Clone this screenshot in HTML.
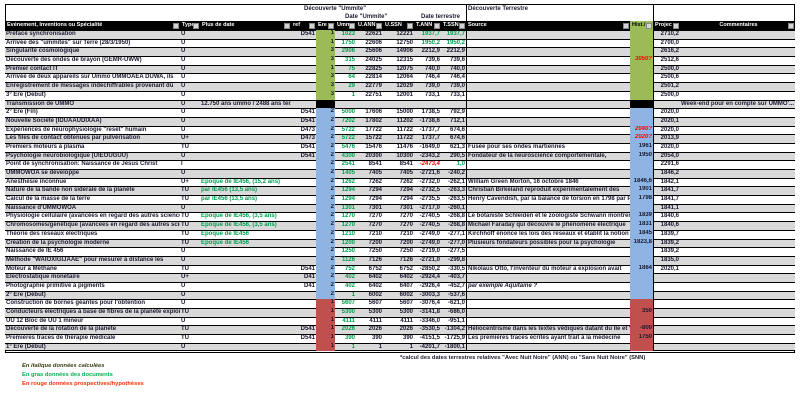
<!DOCTYPE html>
<html><head><meta charset="utf-8">
<style>
*{margin:0;padding:0;box-sizing:border-box}
body{width:800px;height:400px;background:#fff;font-family:"Liberation Sans",sans-serif;position:relative;overflow:hidden;color:#1a1a30}
.abs{position:absolute;white-space:nowrap}
#box{position:absolute;left:5px;top:4px;width:790px;height:349px;border:1px solid #000}
.vl{position:absolute;top:4px;width:1px;height:18px;background:#000}
#hdr{position:absolute;left:5px;top:21px;width:790px;height:9px;background:#000;display:flex}
#hdr div{position:relative;color:#fff;font-weight:bold;font-size:5.5px;line-height:9px;padding-left:2px;overflow:hidden;white-space:nowrap}
#hdr div i{position:absolute;right:1px;top:1.5px;width:6px;height:6px;background:#d4d4d4;border:1px solid #888}
#rows{position:absolute;left:5px;top:30px;width:790px}
.r{height:8.7px;display:flex;border-top:1px solid #000;background:#fff}
.r.g{background:#d9d9d9}
.r div{font-size:6px;font-weight:bold;line-height:7.5px;white-space:nowrap;overflow:hidden;padding:0 1px}
.c1{width:175px}.c2{width:20px}.c3{width:91px}.c4{width:25px;text-align:right}
.c5{width:19px;text-align:right;position:relative;top:-1px;height:8.7px}
.c6{width:21px;text-align:right;color:#00a050}.c7{width:27px;text-align:right}.c8{width:31px;text-align:right}
.c9{width:27px;text-align:right}.c10{width:25px;text-align:right}.c11{width:164px;border-left:1px solid #000}
.c12{width:23px;text-align:right;position:relative;top:-1px;height:8.7px}.c13{width:27px;text-align:right;border-left:1px solid #000}.c14{width:115px}
.G{background:#9bbb59}.B{background:#8db4e2}.R{background:#c0504d}.K{background:#000}
.gr{color:#00a050}.rd{color:#ff0000;font-style:italic}
</style></head><body>
<div id="box"></div>
<div class="vl" style="left:466px"></div>
<div class="vl" style="left:653px"></div>
<div class="abs" style="left:304px;top:6px;font-size:6px;font-weight:bold">Découverte "Ummite"</div>
<div class="abs" style="left:345px;top:14px;font-size:6px;font-weight:bold">Date "Ummite"</div>
<div class="abs" style="left:421px;top:14px;font-size:6px;font-weight:bold">Date terrestre</div>
<div class="abs" style="left:468px;top:6px;font-size:6px;font-weight:bold">Découverte Terrestre</div>
<div id="hdr">
<div style="width:175px">Evénement, Inventions ou Spécialité<i></i></div>
<div style="width:20px">Type<i></i></div>
<div style="width:91px">Plus de date<i></i></div>
<div style="width:25px">ref<i></i></div>
<div style="width:19px">Ere<i></i></div>
<div style="width:21px">Ummo<i></i></div>
<div style="width:27px">U.ANN<i></i></div>
<div style="width:31px">U.SSN<i></i></div>
<div style="width:27px">T.ANN<i></i></div>
<div style="width:25px">T.SSN<i></i></div>
<div style="width:164px">Source<i></i></div>
<div style="width:23px;background:#9bbb59;color:#000">Hist./<i></i></div>
<div style="width:27px">Projec<i></i></div>
<div style="width:115px;text-align:center">Commentaires<i></i></div>
</div>
<div id="rows">
<div class="r g"><div class="c1">Préface synchronisation</div><div class="c2">U</div><div class="c3"></div><div class="c4">D541</div><div class="c5 G">1</div><div class="c6">1023</div><div class="c7">22621</div><div class="c8">12221</div><div class="c9 gr">1937,7</div><div class="c10 gr">1937,7</div><div class="c11"></div><div class="c12 G"></div><div class="c13">2710,2</div><div class="c14"></div></div>
<div class="r"><div class="c1">Arrivée des "ummites" sur Terre (28/3/1950)</div><div class="c2">U</div><div class="c3"></div><div class="c4"></div><div class="c5 G">1</div><div class="c6">1750</div><div class="c7">22606</div><div class="c8">12750</div><div class="c9 gr">1950,2</div><div class="c10 gr">1950,2</div><div class="c11"></div><div class="c12 G"></div><div class="c13">2700,0</div><div class="c14"></div></div>
<div class="r g"><div class="c1">Singularité cosmologique</div><div class="c2">U</div><div class="c3"></div><div class="c4"></div><div class="c5 G">3</div><div class="c6">2906</div><div class="c7">25606</div><div class="c8">14906</div><div class="c9">2212,9</div><div class="c10">2212,9</div><div class="c11"></div><div class="c12 G"></div><div class="c13">2616,2</div><div class="c14"></div></div>
<div class="r"><div class="c1">Découverte des ondes de brayon (GEMR-UWW)</div><div class="c2">U</div><div class="c3"></div><div class="c4"></div><div class="c5 G">3</div><div class="c6">315</div><div class="c7">24025</div><div class="c8">12315</div><div class="c9">739,6</div><div class="c10">739,6</div><div class="c11"></div><div class="c12 G rd">3050?</div><div class="c13">2512,6</div><div class="c14"></div></div>
<div class="r g"><div class="c1">Premier contact IT</div><div class="c2">U</div><div class="c3"></div><div class="c4"></div><div class="c5 G">1</div><div class="c6">75</div><div class="c7">22825</div><div class="c8">12075</div><div class="c9">740,0</div><div class="c10">740,0</div><div class="c11"></div><div class="c12 G"></div><div class="c13">2500,0</div><div class="c14"></div></div>
<div class="r"><div class="c1">Arrivée de deux appareils sur Ummo UMMOAEA DUWA, ils</div><div class="c2">U</div><div class="c3"></div><div class="c4"></div><div class="c5 G">3</div><div class="c6">64</div><div class="c7">22814</div><div class="c8">12064</div><div class="c9">746,4</div><div class="c10">746,4</div><div class="c11"></div><div class="c12 G"></div><div class="c13">2500,6</div><div class="c14"></div></div>
<div class="r g"><div class="c1">Enregistrement de messages indéchiffrables provenant du</div><div class="c2">U</div><div class="c3"></div><div class="c4"></div><div class="c5 G">3</div><div class="c6">29</div><div class="c7">22779</div><div class="c8">12029</div><div class="c9">739,0</div><div class="c10">739,0</div><div class="c11"></div><div class="c12 G"></div><div class="c13">2501,2</div><div class="c14"></div></div>
<div class="r"><div class="c1">3° Ere (Début)</div><div class="c2">U</div><div class="c3"></div><div class="c4"></div><div class="c5 G">3</div><div class="c6">1</div><div class="c7">22751</div><div class="c8">12001</div><div class="c9">733,1</div><div class="c10">733,1</div><div class="c11"></div><div class="c12 G"></div><div class="c13">2500,0</div><div class="c14"></div></div>
<div class="r g"><div class="c1">Transmission de UMMO</div><div class="c2">U</div><div class="c3">12.750 ans ummo / 2488 ans ter.</div><div class="c4"></div><div class="c5 K"></div><div class="c6"></div><div class="c7"></div><div class="c8"></div><div class="c9"></div><div class="c10"></div><div class="c11"></div><div class="c12 K"></div><div class="c13"></div><div class="c14">Week-end pour en compte sur UMMO'...</div></div>
<div class="r"><div class="c1">2° Ere (Fin)</div><div class="c2">U</div><div class="c3"></div><div class="c4">D541</div><div class="c5 B">2</div><div class="c6">5000</div><div class="c7">17606</div><div class="c8">15000</div><div class="c9">1738,5</div><div class="c10">792,9</div><div class="c11"></div><div class="c12 B"></div><div class="c13">2020,0</div><div class="c14"></div></div>
<div class="r g"><div class="c1">Nouvelle Société (IDUAAUDIXAA)</div><div class="c2">U</div><div class="c3"></div><div class="c4">D541</div><div class="c5 B">2</div><div class="c6">7202</div><div class="c7">17802</div><div class="c8">11202</div><div class="c9">-1738,6</div><div class="c10">712,1</div><div class="c11"></div><div class="c12 B"></div><div class="c13">2020,1</div><div class="c14"></div></div>
<div class="r"><div class="c1">Expériences de neurophysiologie "reset" humain</div><div class="c2">U</div><div class="c3"></div><div class="c4">D473</div><div class="c5 B">2</div><div class="c6">5722</div><div class="c7">17722</div><div class="c8">11722</div><div class="c9">-1737,7</div><div class="c10">674,6</div><div class="c11"></div><div class="c12 B rd">2040?</div><div class="c13">2020,0</div><div class="c14"></div></div>
<div class="r g"><div class="c1">Les files de contact obtenues par pulvérisation</div><div class="c2">U+</div><div class="c3"></div><div class="c4">D473</div><div class="c5 B">2</div><div class="c6">5722</div><div class="c7">15722</div><div class="c8">11722</div><div class="c9">1737,7</div><div class="c10">674,6</div><div class="c11"></div><div class="c12 B rd">2020?</div><div class="c13">2013,9</div><div class="c14"></div></div>
<div class="r"><div class="c1">Premiers moteurs à plasma</div><div class="c2">TU</div><div class="c3"></div><div class="c4">D541</div><div class="c5 B">2</div><div class="c6">5476</div><div class="c7">15476</div><div class="c8">11476</div><div class="c9">-1649,0</div><div class="c10">621,3</div><div class="c11">Fusée pour ses ondes martiennes</div><div class="c12 B">1961</div><div class="c13">2020,0</div><div class="c14"></div></div>
<div class="r g"><div class="c1">Psychologie neurobiologique (UIEOUGUU)</div><div class="c2">U</div><div class="c3"></div><div class="c4">D541</div><div class="c5 B">2</div><div class="c6">4300</div><div class="c7">20300</div><div class="c8">10300</div><div class="c9">-2343,2</div><div class="c10">290,5</div><div class="c11">Fondateur de la neuroscience comportementale,</div><div class="c12 B">1950</div><div class="c13">2054,0</div><div class="c14"></div></div>
<div class="r"><div class="c1">Point de synchronisation: Naissance de Jésus Christ</div><div class="c2">I</div><div class="c3"></div><div class="c4"></div><div class="c5 B">2</div><div class="c6">2541</div><div class="c7">8541</div><div class="c8">8541</div><div class="c9 rd">-2473,4</div><div class="c10 gr">1,0</div><div class="c11"></div><div class="c12 B"></div><div class="c13">2291,6</div><div class="c14"></div></div>
<div class="r g"><div class="c1">UMMOWOA se développe</div><div class="c2">U</div><div class="c3"></div><div class="c4"></div><div class="c5 B">2</div><div class="c6">1405</div><div class="c7">7405</div><div class="c8">7405</div><div class="c9">-2721,6</div><div class="c10">-240,2</div><div class="c11"></div><div class="c12 B"></div><div class="c13">1846,2</div><div class="c14"></div></div>
<div class="r"><div class="c1">Anesthésie inconnue</div><div class="c2">U+</div><div class="c3 gr">Epoque de IE456, (15,2 ans)</div><div class="c4"></div><div class="c5 B">2</div><div class="c6">1262</div><div class="c7">7262</div><div class="c8">7262</div><div class="c9">-2732,0</div><div class="c10">-262,1</div><div class="c11">William Green Morton, 16 octobre 1846</div><div class="c12 B">1846,6</div><div class="c13">1842,1</div><div class="c14"></div></div>
<div class="r g"><div class="c1">Nature de la bande non sidérale de la planète</div><div class="c2">TU</div><div class="c3 gr">par IE456 (13,5 ans)</div><div class="c4"></div><div class="c5 B">2</div><div class="c6">1294</div><div class="c7">7294</div><div class="c8">7294</div><div class="c9">-2732,5</div><div class="c10">-263,3</div><div class="c11">Christian Birkeland reproduit expérimentalement des</div><div class="c12 B">1901</div><div class="c13">1841,7</div><div class="c14"></div></div>
<div class="r"><div class="c1">Calcul de la masse de la terre</div><div class="c2">TU</div><div class="c3 gr">par IE456 (13,5 ans)</div><div class="c4"></div><div class="c5 B">2</div><div class="c6">1294</div><div class="c7">7294</div><div class="c8">7294</div><div class="c9">-2735,5</div><div class="c10">-263,5</div><div class="c11">Henry Cavendish, par la balance de torsion en 1798 par P</div><div class="c12 B">1798</div><div class="c13">1841,7</div><div class="c14"></div></div>
<div class="r g"><div class="c1">Naissance d'UMMOWOA</div><div class="c2">U</div><div class="c3"></div><div class="c4"></div><div class="c5 B">2</div><div class="c6">1301</div><div class="c7">7301</div><div class="c8">7301</div><div class="c9">-2717,0</div><div class="c10">-260,1</div><div class="c11"></div><div class="c12 B"></div><div class="c13">1841,1</div><div class="c14"></div></div>
<div class="r"><div class="c1">Physiologie cellulaire (avancées en regard des autres sciences)</div><div class="c2">TU</div><div class="c3 gr">Epoque de IE456, (3,5 ans)</div><div class="c4"></div><div class="c5 B">2</div><div class="c6">1270</div><div class="c7">7270</div><div class="c8">7270</div><div class="c9">-2740,5</div><div class="c10">-268,8</div><div class="c11">Le botaniste Schleiden et le zoologiste Schwann montrent, la</div><div class="c12 B">1839</div><div class="c13">1840,6</div><div class="c14"></div></div>
<div class="r g"><div class="c1">Chromosomes/génétique (avancées en regard des autres sciences)</div><div class="c2">TU</div><div class="c3 gr">Epoque de IE456, (3,5 ans)</div><div class="c4"></div><div class="c5 B">2</div><div class="c6">1270</div><div class="c7">7270</div><div class="c8">7270</div><div class="c9">-2740,5</div><div class="c10">-268,8</div><div class="c11">Michael Faraday qui découvre le phénomène électrique</div><div class="c12 B">1831</div><div class="c13">1840,6</div><div class="c14"></div></div>
<div class="r"><div class="c1">Théorie des réseaux électriques</div><div class="c2">TU</div><div class="c3 gr">Epoque de IE456</div><div class="c4"></div><div class="c5 B">2</div><div class="c6">1210</div><div class="c7">7210</div><div class="c8">7210</div><div class="c9">-2749,0</div><div class="c10">-277,1</div><div class="c11">Kirchhoff énonce les lois des réseaux et établit la notion de p</div><div class="c12 B">1845</div><div class="c13">1839,7</div><div class="c14"></div></div>
<div class="r g"><div class="c1">Création de la psychologie moderne</div><div class="c2">TU</div><div class="c3 gr">Epoque de IE456</div><div class="c4"></div><div class="c5 B">2</div><div class="c6">1200</div><div class="c7">7200</div><div class="c8">7200</div><div class="c9">-2749,0</div><div class="c10">-277,0</div><div class="c11">Plusieurs fondateurs possibles pour la psychologie</div><div class="c12 B">1823,8</div><div class="c13">1839,2</div><div class="c14"></div></div>
<div class="r"><div class="c1">Naissance de IE 456</div><div class="c2">U</div><div class="c3"></div><div class="c4"></div><div class="c5 B">2</div><div class="c6">1250</div><div class="c7">7250</div><div class="c8">7250</div><div class="c9">-2719,0</div><div class="c10">-277,5</div><div class="c11"></div><div class="c12 B"></div><div class="c13">1839,2</div><div class="c14"></div></div>
<div class="r g"><div class="c1">Méthode "WAIOXIGIJAAE" pour mesurer à distance les</div><div class="c2">U</div><div class="c3"></div><div class="c4"></div><div class="c5 B">2</div><div class="c6">1126</div><div class="c7">7126</div><div class="c8">7126</div><div class="c9">-2721,0</div><div class="c10">-299,8</div><div class="c11"></div><div class="c12 B"></div><div class="c13">1835,0</div><div class="c14"></div></div>
<div class="r"><div class="c1">Moteur à Méthane</div><div class="c2">TU</div><div class="c3"></div><div class="c4">D541</div><div class="c5 B">2</div><div class="c6">752</div><div class="c7">6752</div><div class="c8">6752</div><div class="c9">-2850,2</div><div class="c10">-330,5</div><div class="c11">Nikolaus Otto, l'inventeur du moteur à explosion avait</div><div class="c12 B">1864</div><div class="c13">2020,1</div><div class="c14"></div></div>
<div class="r g"><div class="c1">Electrostatique monétaire</div><div class="c2">U+</div><div class="c3"></div><div class="c4">D41</div><div class="c5 B">2</div><div class="c6">402</div><div class="c7">6402</div><div class="c8">6402</div><div class="c9">-2924,4</div><div class="c10">-403,7</div><div class="c11"></div><div class="c12 B"></div><div class="c13"></div><div class="c14"></div></div>
<div class="r"><div class="c1">Photographie primitive à pigments</div><div class="c2">U</div><div class="c3"></div><div class="c4">D41</div><div class="c5 B">2</div><div class="c6">402</div><div class="c7">6402</div><div class="c8">6407</div><div class="c9">-2926,4</div><div class="c10">-452,7</div><div class="c11"><i>par exemple Aquitaine ?</i></div><div class="c12 B"></div><div class="c13"></div><div class="c14"></div></div>
<div class="r g"><div class="c1">2° Ere (Début)</div><div class="c2">U</div><div class="c3"></div><div class="c4"></div><div class="c5 B">2</div><div class="c6">1</div><div class="c7">6002</div><div class="c8">6002</div><div class="c9">-3003,3</div><div class="c10">-537,6</div><div class="c11"></div><div class="c12 B"></div><div class="c13"></div><div class="c14"></div></div>
<div class="r"><div class="c1">Construction de bornes géantes pour l'obtention</div><div class="c2">U</div><div class="c3"></div><div class="c4"></div><div class="c5 R">1</div><div class="c6">5607</div><div class="c7">5607</div><div class="c8">5607</div><div class="c9">-3076,4</div><div class="c10">-621,0</div><div class="c11"></div><div class="c12 R"></div><div class="c13"></div><div class="c14"></div></div>
<div class="r g"><div class="c1">Conducteurs électriques à base de fibres de la planète exploités</div><div class="c2">TU</div><div class="c3"></div><div class="c4"></div><div class="c5 R">1</div><div class="c6">5300</div><div class="c7">5300</div><div class="c8">5300</div><div class="c9">-3141,8</div><div class="c10">-686,0</div><div class="c11"></div><div class="c12 R">350</div><div class="c13"></div><div class="c14"></div></div>
<div class="r"><div class="c1">UU 12 Bloc de UU 1 mineur</div><div class="c2">U</div><div class="c3"></div><div class="c4"></div><div class="c5 R">1</div><div class="c6">4111</div><div class="c7">4111</div><div class="c8">4111</div><div class="c9">-3346,0</div><div class="c10">-951,1</div><div class="c11"></div><div class="c12 R"></div><div class="c13"></div><div class="c14"></div></div>
<div class="r g"><div class="c1">Découverte de la rotation de la planète</div><div class="c2">TU</div><div class="c3"></div><div class="c4">D541</div><div class="c5 R">1</div><div class="c6">2026</div><div class="c7">2026</div><div class="c8">2026</div><div class="c9">-3530,5</div><div class="c10">-1304,2</div><div class="c11">Héliocentrisme dans les textes védiques datant du IIe et V</div><div class="c12 R">-800</div><div class="c13"></div><div class="c14"></div></div>
<div class="r"><div class="c1">Premières traces de thérapie médicale</div><div class="c2">TU</div><div class="c3"></div><div class="c4">D541</div><div class="c5 R">1</div><div class="c6">390</div><div class="c7">390</div><div class="c8">390</div><div class="c9">-4151,5</div><div class="c10">-1725,9</div><div class="c11">Les premières traces écrites ayant trait à la médecine</div><div class="c12 R">1750</div><div class="c13"></div><div class="c14"></div></div>
<div class="r g" style="border-bottom:1px solid #000"><div class="c1">1° Ere (Début)</div><div class="c2">U</div><div class="c3"></div><div class="c4"></div><div class="c5 R">1</div><div class="c6">1</div><div class="c7">1</div><div class="c8">1</div><div class="c9">-4201,7</div><div class="c10">-1800,1</div><div class="c11"></div><div class="c12 R"></div><div class="c13"></div><div class="c14"></div></div>
</div>
<div class="abs" style="left:400px;top:355px;font-size:5.8px;font-weight:bold">*calcul des dates terrestres relatives "Avec Nuit Noire" (ANN) ou "Sans Nuit Noire" (SNN)</div>
<div class="abs" style="left:22px;top:363px;font-size:5.8px;color:#3a3a10;font-style:italic;font-weight:bold">En italique données calculées</div>
<div class="abs" style="left:22px;top:372px;font-size:5.8px;color:#00b050;font-weight:bold">En gras données des documents</div>
<div class="abs" style="left:22px;top:381px;font-size:5.8px;color:#ff3300;font-weight:bold">En rouge données prospectives/hypothèses</div>
</body></html>
